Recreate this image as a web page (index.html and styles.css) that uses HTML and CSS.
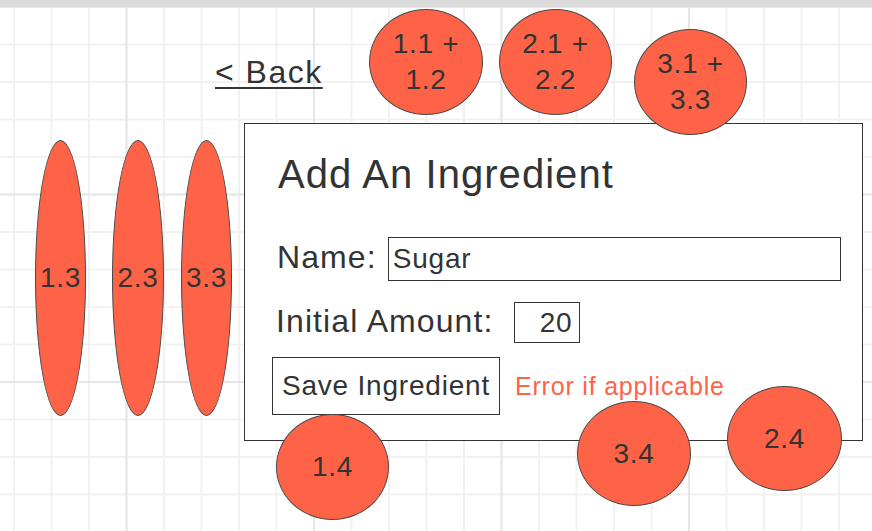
FILE: index.html
```html
<!DOCTYPE html>
<html>
<head>
<meta charset="utf-8">
<link rel="stylesheet" href="styles.css">
</head>
<body>
<div class="topbar"></div>
<div class="canvas">
  <a class="back">&lt; Back</a>

  <div class="card">
    <div class="title">Add An Ingredient</div>
    <div class="row row-name">
      <span class="label">Name:</span>
      <span class="field field-name">Sugar</span>
    </div>
    <div class="row row-amount">
      <span class="label">Initial Amount:</span>
      <span class="field field-amount">20</span>
    </div>
    <div class="row row-save">
      <span class="button">Save Ingredient</span>
      <span class="error">Error if applicable</span>
    </div>
  </div>

  <div class="node e1">1.1 +<br>1.2</div>
  <div class="node e2">2.1 +<br>2.2</div>
  <div class="node e3">3.1 +<br>3.3</div>
  <div class="node e4">1.3</div>
  <div class="node e5">2.3</div>
  <div class="node e6">3.3</div>
  <div class="node e7">1.4</div>
  <div class="node e8">3.4</div>
  <div class="node e9">2.4</div>
</div>
</body>
</html>
```

FILE: styles.css
```css
html, body {
  margin: 0;
  padding: 0;
  width: 872px;
  height: 531px;
  overflow: hidden;
  background: #ffffff;
  font-family: "Liberation Sans", Arial, sans-serif;
  color: #333333;
}

body {
  display: flex;
  flex-direction: column;
}

.topbar {
  height: 7px;
  background: #dadada;
  flex: none;
}

.canvas {
  position: relative;
  flex: 1;
  background-color: #ffffff;
  background-image:
    linear-gradient(to right, #e6e6e6 0, #e6e6e6 2px, transparent 2px),
    linear-gradient(to bottom, #e6e6e6 0, #e6e6e6 2px, transparent 2px),
    linear-gradient(to right, #f1f1f1 0, #f1f1f1 2px, transparent 2px),
    linear-gradient(to bottom, #f1f1f1 0, #f1f1f1 2px, transparent 2px);
  background-size:
    187.5px 100%,
    100% 187.5px,
    37.5px 100%,
    100% 37.5px;
  background-position:
    125.5px 0,
    0 -1px,
    13px 0,
    0 -1px;
}

.back {
  position: absolute;
  left: 215px;
  top: 49px;
  font-size: 32px;
  line-height: 32px;
  letter-spacing: 1.5px;
  color: #333333;
  text-decoration: underline;
  text-decoration-thickness: 2px;
  text-underline-offset: 4px;
}

.card {
  position: absolute;
  left: 244px;
  top: 116px;
  width: 619px;
  height: 318px;
  box-sizing: border-box;
  border: 1px solid #333333;
  background: #ffffff;
  padding: 27px 0 0 33px;
}

.title {
  font-size: 40px;
  line-height: 46px;
  letter-spacing: 1.05px;
  white-space: nowrap;
}

.row {
  display: flex;
  align-items: baseline;
  white-space: nowrap;
}

.label {
  font-size: 32px;
  line-height: 32px;
  letter-spacing: 1.1px;
}

.field {
  box-sizing: border-box;
  border: 1px solid #333333;
  background: #ffffff;
  font-size: 28px;
  letter-spacing: 0.8px;
}

.row-name {
  margin-top: 40px;
  margin-left: -1px;
  gap: 11px;
}

.field-name {
  width: 453px;
  height: 44px;
  line-height: 42px;
  padding-left: 4px;
}

.row-amount {
  margin-top: 21px;
  margin-left: -2px;
  gap: 20px;
}

.field-amount {
  width: 66px;
  height: 41px;
  line-height: 39px;
  text-align: right;
  padding-right: 6px;
}

.row-save {
  margin-top: 14px;
  margin-left: -6px;
  gap: 15px;
}

.button {
  box-sizing: border-box;
  width: 228px;
  height: 58px;
  border: 1px solid #333333;
  font-size: 28px;
  line-height: 56px;
  letter-spacing: 0.8px;
  text-align: center;
}

.error {
  font-size: 25px;
  letter-spacing: 0.8px;
  color: #ff6347;
}

.node {
  position: absolute;
  box-sizing: border-box;
  display: flex;
  align-items: center;
  justify-content: center;
  text-align: center;
  border: 1px solid #4a4a4a;
  border-radius: 50%;
  background: #ff6347;
  color: #333333;
  font-size: 28px;
  line-height: 36px;
  letter-spacing: 0.7px;
  white-space: nowrap;
}

.e1 { left: 369px; top: 2px;   width: 114px; height: 106px; }
.e2 { left: 499px; top: 2px;   width: 113px; height: 106px; }
.e3 { left: 634px; top: 22px;  width: 113px; height: 106px; }
.e4 { left: 35px;  top: 133px; width: 51px;  height: 276px; }
.e5 { left: 112px; top: 133px; width: 52px;  height: 276px; }
.e6 { left: 181px; top: 133px; width: 51px;  height: 276px; }
.e7 { left: 276px; top: 407px; width: 113px; height: 106px; }
.e8 { left: 577px; top: 394px; width: 114px; height: 105px; }
.e9 { left: 727px; top: 379px; width: 115px; height: 105px; }
```
